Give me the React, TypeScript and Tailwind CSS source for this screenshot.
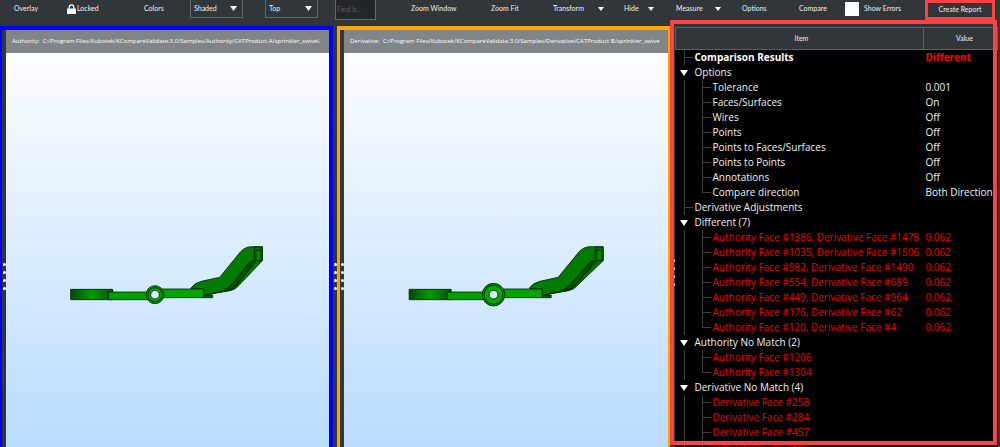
type Row = { name: string; value?: string };

type Group = { name: string; value?: string; bold?: boolean; red?: boolean; rows?: Row[] };

const groups: Group[] = [
  { name: "Comparison Results", value: "Different", bold: true },
  {
    name: "Options",
    rows: [
      { name: "Tolerance", value: "0.001" },
      { name: "Faces/Surfaces", value: "On" },
      { name: "Wires", value: "Off" },
      { name: "Points", value: "Off" },
      { name: "Points to Faces/Surfaces", value: "Off" },
      { name: "Points to Points", value: "Off" },
      { name: "Annotations", value: "Off" },
      { name: "Compare direction", value: "Both Directions" },
    ],
  },
  { name: "Derivative Adjustments" },
  {
    name: "Different (7)",
    red: true,
    rows: [
      { name: "Authority Face #1386, Derivative Face #1478", value: "0.062" },
      { name: "Authority Face #1035, Derivative Face #1506", value: "0.062" },
      { name: "Authority Face #982, Derivative Face #1490", value: "0.062" },
      { name: "Authority Face #554, Derivative Face #689", value: "0.062" },
      { name: "Authority Face #449, Derivative Face #964", value: "0.062" },
      { name: "Authority Face #176, Derivative Face #62", value: "0.062" },
      { name: "Authority Face #120, Derivative Face #4", value: "0.062" },
    ],
  },
  {
    name: "Authority No Match (2)",
    red: true,
    rows: [{ name: "Authority Face #1206" }, { name: "Authority Face #1304" }],
  },
  {
    name: "Derivative No Match (4)",
    red: true,
    rows: [
      { name: "Derivative Face #258" },
      { name: "Derivative Face #284" },
      { name: "Derivative Face #457" },
      { name: "Derivative Face #561" },
    ],
  },
];

function Caret({ className = "w-[6px] h-1" }: { className?: string }) {
  return (
    <svg className={`shrink-0 ${className}`} viewBox="0 0 8 5" preserveAspectRatio="none" fill="white">
      <path d="M0 0h8L4 5z" />
    </svg>
  );
}

function ToolButton({ label, menu, className = "" }: { label: string; menu?: boolean; className?: string }) {
  return (
    <button type="button" className={`flex h-[17px] items-center justify-between ${className}`}>
      {label}
      {menu && <Caret />}
    </button>
  );
}

function ToolSelect({ label, option }: { label: string; option: string }) {
  return (
    <div className="relative h-[18px] w-[53px]">
      <select
        aria-label={label}
        className="h-full w-full appearance-none border border-t-0 border-[#63686c] bg-[#31363b] pl-[3px] text-[#eff0f1]"
      >
        <option>{option}</option>
      </select>
      <span className="pointer-events-none absolute inset-y-0 right-[6px] flex items-center pb-[2px]">
        <Caret className="w-[7px] h-[5px]" />
      </span>
    </div>
  );
}

function Toolbar() {
  return (
    <header className="grid h-[26px] grid-cols-[53fr_77fr_46fr_75fr_70fr_76fr_80fr_62fr_71fr_52fr_66fr_57fr_46fr_80fr_75fr] items-start justify-items-start whitespace-nowrap pl-[14px] font-[Lato,sans-serif] text-[7px]">
      <ToolButton label="Overlay" />
      <button type="button" className="flex h-[17px] items-center gap-px">
        <svg className="h-[10px] w-[9px]" viewBox="0 0 9 10">
          <path d="M2.2 5V3.2a2.3 2.3 0 0 1 4.6 0V5" fill="none" stroke="white" strokeWidth="1.2" />
          <rect y="4.4" width="9" height="5.6" rx="0.6" fill="white" />
        </svg>
        Locked
      </button>
      <ToolButton label="Colors" />
      <ToolSelect label="Display mode" option="Shaded" />
      <ToolSelect label="View" option="Top" />
      <input
        type="text"
        aria-label="Find"
        placeholder="Find b..."
        className="h-5 w-[41px] border border-t-0 border-[#63686c] bg-[#232629] pb-[2px] pl-px placeholder:text-[#5d6164]"
      />
      <ToolButton label="Zoom Window" />
      <ToolButton label="Zoom Fit" />
      <ToolButton label="Transform" menu className="w-[51px]" />
      <ToolButton label="Hide" menu className="w-[30px]" />
      <ToolButton label="Measure" menu className="w-[45px]" />
      <ToolButton label="Options" />
      <ToolButton label="Compare" />
      <label className="flex h-[17px] items-center gap-[5px]">
        <input type="checkbox" className="h-[14px] w-[14px] appearance-none bg-white" />
        Show Errors
      </label>
      <button type="button" className="h-5 w-[70px] border-[3px] border-[#fb4343] pb-[2px]">
        Create Report
      </button>
    </header>
  );
}

function Grip() {
  return (
    <div className="flex h-full w-1 shrink-0 flex-col items-center gap-[5px] bg-[#31363b] pt-[233px]">
      {[0, 1, 2, 3].map((i) => (
        <span key={i} className="h-[3px] w-[3px] shrink-0 rounded-full bg-white" />
      ))}
    </div>
  );
}

// side view of the sprinkler swivel
function Part({ id, ring, tip }: { id: string; ring: number; tip: number }) {
  return (
    <svg
      className="h-full w-full"
      viewBox="-162 -546 969 1182"
      stroke="#032803"
      strokeWidth="2.5"
      strokeLinejoin="round"
      role="img"
      aria-label={`${id} model`}
    >
      <defs>
        <linearGradient id={`${id}-barrel`}>
          <stop offset="0" stopColor="#034803" />
          <stop offset="0.5" stopColor="#009c00" />
          <stop offset="0.8" stopColor="#007000" />
          <stop offset="1" stopColor="#005200" />
        </linearGradient>
      </defs>
      <path
        d={`M392 160Q403 144 424 139L479 127 541 51Q555 35 576 35H${tip}V77L538 150Q527 164 510 167L458 176 431 180V162z`}
        fill="#007b00"
      />
      <path d={`M${tip - 34} 78H${tip - 24}L530 152Q520 164 498 168L440 179 500 165 512 154z`} fill="#015401" />
      <path d={`M${tip - 36} 79L515 148Q504 161 488 166`} fill="none" />
      <path d={`M${tip - 18} 79L528 151Q520 162 504 166`} fill="none" />
      <path d={`M${tip - 24} 36H${tip}V77H${tip - 24}z`} fill="#007000" />
      <path d={`M${tip - 19} 46H${tip - 4}V76H${tip - 19}z`} fill="#008600" />
      <path d="M431 180H458V188H431z" fill="#005800" />
      <path d="M32 163H158V194H32z" fill={`url(#${id}-barrel)`} />
      <path d="M146 171H265V194H146z" fill="#00a000" />
      <path d="M305 162H431V188H305z" fill="#00a500" />
      <circle cx="285" cy="179" r={ring} fill="#008d00" />
      <circle cx="285" cy="179" r={ring - 6} fill="#00a800" />
      <circle cx="285" cy="179" r="13" fill="#dcecfe" />
    </svg>
  );
}

function View({
  title,
  path,
  frame,
  children,
}: {
  title: string;
  path: string;
  frame: string;
  children: React.ReactNode;
}) {
  return (
    <section className={`flex min-w-0 overflow-hidden ${frame}`}>
      <Grip />
      <div className="flex min-w-0 flex-1 flex-col">
        <h2 className="h-[23px] shrink-0 overflow-hidden whitespace-pre bg-[#828587] pl-[6px] text-[6px] leading-[23px] text-white">
          {title}:{"  "}
          {path}
        </h2>
        <div className="min-h-0 flex-1 bg-linear-to-b from-[#fdfdff] to-[#b9dcff]">{children}</div>
      </div>
    </section>
  );
}

function GroupRows({ group }: { group: Group }) {
  const rows = group.rows ?? [];
  return (
    <>
      <tr className={group.bold ? "font-bold text-white" : ""}>
        <td className="p-0">
          <div className="flex h-[15px] items-center">
            {rows.length > 0 ? (
              <button type="button" aria-label={`Collapse ${group.name}`} className="w-[19px] pl-1">
                <Caret className="w-2 h-[6px]" />
              </button>
            ) : (
              <>
                <span className="h-full w-[9px] border-r border-[#404040]" />
                <span className="mr-[2px] w-2 border-t border-[#404040]" />
              </>
            )}
            {group.name}
          </div>
        </td>
        <td className={`p-0 pl-[2px] ${group.bold ? "text-[#fe0000]" : ""}`}>{group.value}</td>
      </tr>
      {rows.map((row, i) => (
        <tr key={row.name} className={group.red ? "text-[#ec0000]" : ""}>
          <td className="p-0">
            <div className="flex h-[15px] items-center">
              <span className="h-full w-[9px] shrink-0 border-r border-[#404040]" />
              <span
                className={`w-[18px] shrink-0 self-start border-r border-[#404040] ${
                  i === rows.length - 1 ? "h-2" : "h-full"
                }`}
              />
              <span className="mr-[2px] w-2 shrink-0 border-t border-[#404040]" />
              {row.name}
            </div>
          </td>
          <td className="p-0 pl-[2px]">{row.value}</td>
        </tr>
      ))}
    </>
  );
}

function Results() {
  return (
    <aside className="relative flex min-w-0">
      <div className="flex w-[5px] shrink-0 justify-end">
        <Grip />
      </div>
      <div className="mr-[2px] mt-px min-w-0 flex-1 overflow-hidden bg-black">
        <table className="w-full table-fixed border-collapse whitespace-nowrap text-[10px] leading-[15px] text-[#f0f0f0]">
          <thead>
            <tr className="h-[22px] bg-[#31363b] font-[Lato,sans-serif] text-[7px] text-[#eff0f1]">
              <th className="w-[77%] border border-[#5d6265] p-0 pl-1 font-normal">Item</th>
              <th className="w-[23%] border border-[#5d6265] p-0 pl-2 font-normal">Value</th>
            </tr>
          </thead>
          <tbody>
            {groups.map((group) => (
              <GroupRows key={group.name} group={group} />
            ))}
          </tbody>
        </table>
      </div>
      <div className="pointer-events-none absolute -top-[6px] bottom-[2px] left-0 right-[3px] border-4 border-[#fb4343]" />
    </aside>
  );
}

export default function App() {
  return (
    <div className="flex h-screen flex-col overflow-hidden bg-[#31363b] font-['Open_Sans','Noto_Sans',sans-serif] text-[#eff0f1]">
      <Toolbar />
      <main className="grid min-h-0 flex-1 grid-cols-[333fr_4px_333fr_330fr] grid-rows-[minmax(0,1fr)]">
        <View
          title="Authority"
          path="C:/Program Files/Kubotek/KCompareValidate.3.0/Samples/Authority/CATProduct A/sprinkler_swivel."
          frame="border-t-4 border-l-2 border-r-4 border-[#0000fb]"
        >
          <Part id="authority" ring={27} tip={607} />
        </View>
        <div className="pt-1">
          <Grip />
        </div>
        <View
          title="Derivative"
          path="C:/Program Files/Kubotek/KCompareValidate.3.0/Samples/Derivative/CATProduct B/sprinkler_swive"
          frame="border-t-4 border-l-3 border-r-2 border-[#ffa500]"
        >
          <Part id="derivative" ring={34} tip={614} />
        </View>
        <Results />
      </main>
    </div>
  );
}
